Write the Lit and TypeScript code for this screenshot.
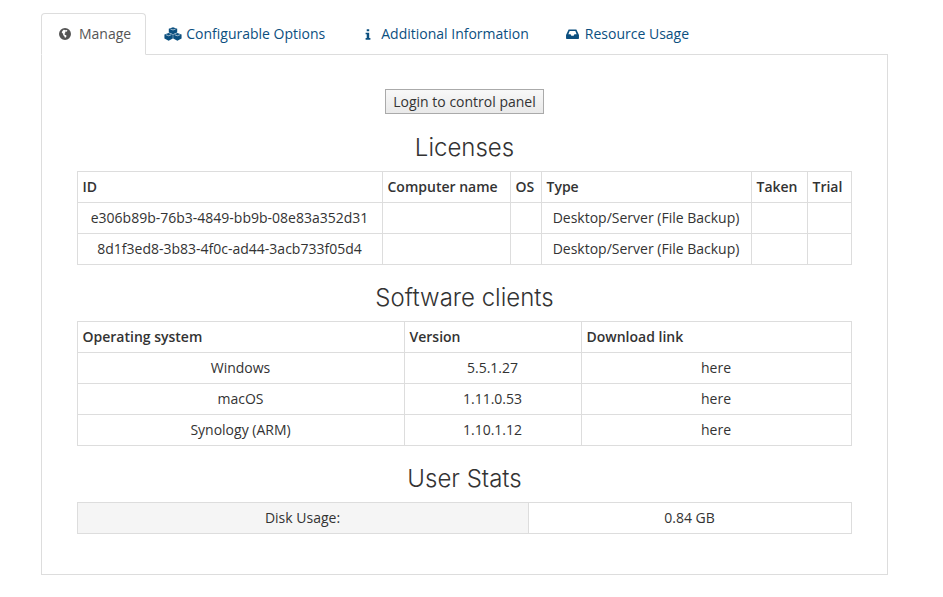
import { LitElement, html, css, svg } from "lit";
import { customElement } from "lit/decorators.js";

const globe = svg`<svg class="ic" viewBox="0 0 24 24" width="12" height="12"><path fill="currentColor" fill-rule="evenodd" d="M12 0a12 12 0 1 0 0 24 12 12 0 0 0 0-24zM10 3.500l3 1 2.500-.5 1.500 1.500-2 2-2-.5-1 1.500 1 1.500-2 1.500.5 2 3 1 .5 2-2 3-1.500-.5-1-3-2-1.500-.5-3-2.500-2.500c.5-2 2-4 4-5.500z"/></svg>`;
const cubes = svg`<svg class="ic" viewBox="0 0 20 16" width="18" height="14"><g fill="currentColor"><path d="M10 .3l4.800 1.700v4.300L10 8.300 5.200 6.300V2z"/><path d="M5 6.800l4.800 1.800v4.600L5 15.700.2 13.200V8.600z"/><path d="M15 6.800l4.800 1.800v4.600L15 15.700l-4.800-2.500V8.600z"/></g><g fill="none" stroke="#fff" stroke-width=".7"><path d="M7 2.300L10 3.400l3-1.100M1.800 8.800L5 10l3.200-1.200M11.800 8.800L15 10l3.200-1.200"/></g></svg>`;
const info = svg`<svg class="ic" viewBox="0 0 8 14" width="6" height="11"><path fill="currentColor" d="M2.300 0h3.300v2.800H2.300zM.8 4.500h4.800v7.300h1.600V14H.8v-2.200h1.500V6.700H.8z"/></svg>`;
const inbox = svg`<svg class="ic" viewBox="0 0 16 13" width="13" height="10.500"><path fill="currentColor" fill-rule="evenodd" d="M3.200.5h9.600L16 7.500v3.700c0 .9-.7 1.600-1.600 1.600H1.600C.7 12.800 0 12.100 0 11.200V7.500zM4.500 2.400L2.900 6.600h2.700l1 1.800h2.800l1-1.800h2.700L11.500 2.400z"/></svg>`;

@customElement("app-root")
export class AppRoot extends LitElement {
  static styles = css`
    :host {
      display: block;
      padding: 13px 55px 0 41px;
      font: 14px/20px "Open Sans", sans-serif;
      color: #333;
      background: #fff;
    }
    .tabs { display: flex; height: 42px; position: relative; z-index: 1; }
    .tab {
      display: flex;
      align-items: center;
      height: 42px;
      box-sizing: border-box;
      margin-right: 2px;
      color: #0b4f7f;
      white-space: nowrap;
      border: 1px solid transparent;
    }
    .tab.active {
      color: #555;
      background: #fff;
      border-color: #ddd #ddd #fff;
      border-radius: 4px 4px 0 0;
      margin-right: 0;
      padding: 0 14px 0 17px;
    }
    .w-m .ic { margin-right: 8px; }
    .w-c { padding: 0 17px; }
    .w-c .ic { margin-right: 4px; }
    .w-i { padding: 0 18px 0 19px; }
    .w-i .ic { margin-right: 10px; }
    .w-r { padding: 0 18px 0 15px; }
    .w-r .ic { margin-right: 6px; }
    .panel {
      border: 1px solid #ddd;
      margin-top: -1px;
      padding: 34px 35px 41px;
      height: 521px;
      box-sizing: border-box;
      display: flex;
      flex-direction: column;
      align-items: stretch;
    }
    .btn-row { display: flex; justify-content: center; }
    button {
      font: inherit;
      color: #333;
      height: 25px;
      width: 159px;
      padding: 0;
      box-sizing: border-box;
      border: 1px solid #aaa;
      border-radius: 0;
      background: linear-gradient(#f8f8f8, #e9e9e9);
    }
    h2 {
      font: 300 24px/26px Inter, Lato, sans-serif;
      text-align: center;
      margin: 0;
      color: #333;
    }
    .h1 { margin-top: 21px; margin-bottom: 10px; }
    .h2 { margin-top: 20px; margin-bottom: 10px; }
    .h3 { margin-top: 20px; margin-bottom: 10px; }
    table {
      border-collapse: collapse;
      table-layout: fixed;
      width: 774px;
    }
    td, th {
      border: 1px solid #ddd;
      height: 31px;
      box-sizing: border-box;
      text-align: center;
      white-space: nowrap;
      overflow: hidden;
    }
    td { padding: 0 5px 0 4px; }
    th { padding: 0 4.500px; text-align: left; font-weight: 600; }
    .shade { background: #f5f5f5; }
    .c1 { width: 305px; } .c2 { width: 128px; } .c3 { width: 31px; } .c4 { width: 210px; } .c5 { width: 56px; } .c6 { width: 44px; }
    .s1 { width: 327px; } .s2 { width: 177px; } .s3 { width: 270px; }
    .u1 { width: 451px; } .u2 { width: 323px; }
  `;

  render() {
    return html`
      <div class="tabs">
        <div class="tab active w-m">${globe}Manage</div>
        <div class="tab w-c">${cubes}Configurable Options</div>
        <div class="tab w-i">${info}Additional Information</div>
        <div class="tab w-r">${inbox}Resource Usage</div>
      </div>
      <div class="panel">
        <div class="btn-row"><button>Login to control panel</button></div>
        <h2 class="h1">Licenses</h2>
        <table>
          <colgroup><col class="c1" /><col class="c2" /><col class="c3" /><col class="c4" /><col class="c5" /><col class="c6" /></colgroup>
          <tr><th>ID</th><th>Computer name</th><th>OS</th><th>Type</th><th>Taken</th><th>Trial</th></tr>
          <tr><td>e306b89b-76b3-4849-bb9b-08e83a352d31</td><td></td><td></td><td>Desktop/Server (File Backup)</td><td></td><td></td></tr>
          <tr><td>8d1f3ed8-3b83-4f0c-ad44-3acb733f05d4</td><td></td><td></td><td>Desktop/Server (File Backup)</td><td></td><td></td></tr>
        </table>
        <h2 class="h2">Software clients</h2>
        <table>
          <colgroup><col class="s1" /><col class="s2" /><col class="s3" /></colgroup>
          <tr><th>Operating system</th><th>Version</th><th>Download link</th></tr>
          <tr><td>Windows</td><td>5.5.1.27</td><td>here</td></tr>
          <tr><td>macOS</td><td>1.11.0.53</td><td>here</td></tr>
          <tr><td>Synology (ARM)</td><td>1.10.1.12</td><td>here</td></tr>
        </table>
        <h2 class="h3">User Stats</h2>
        <table>
          <colgroup><col class="u1" /><col class="u2" /></colgroup>
          <tr><td class="shade">Disk Usage:</td><td>0.84 GB</td></tr>
        </table>
      </div>
    `;
  }
}
